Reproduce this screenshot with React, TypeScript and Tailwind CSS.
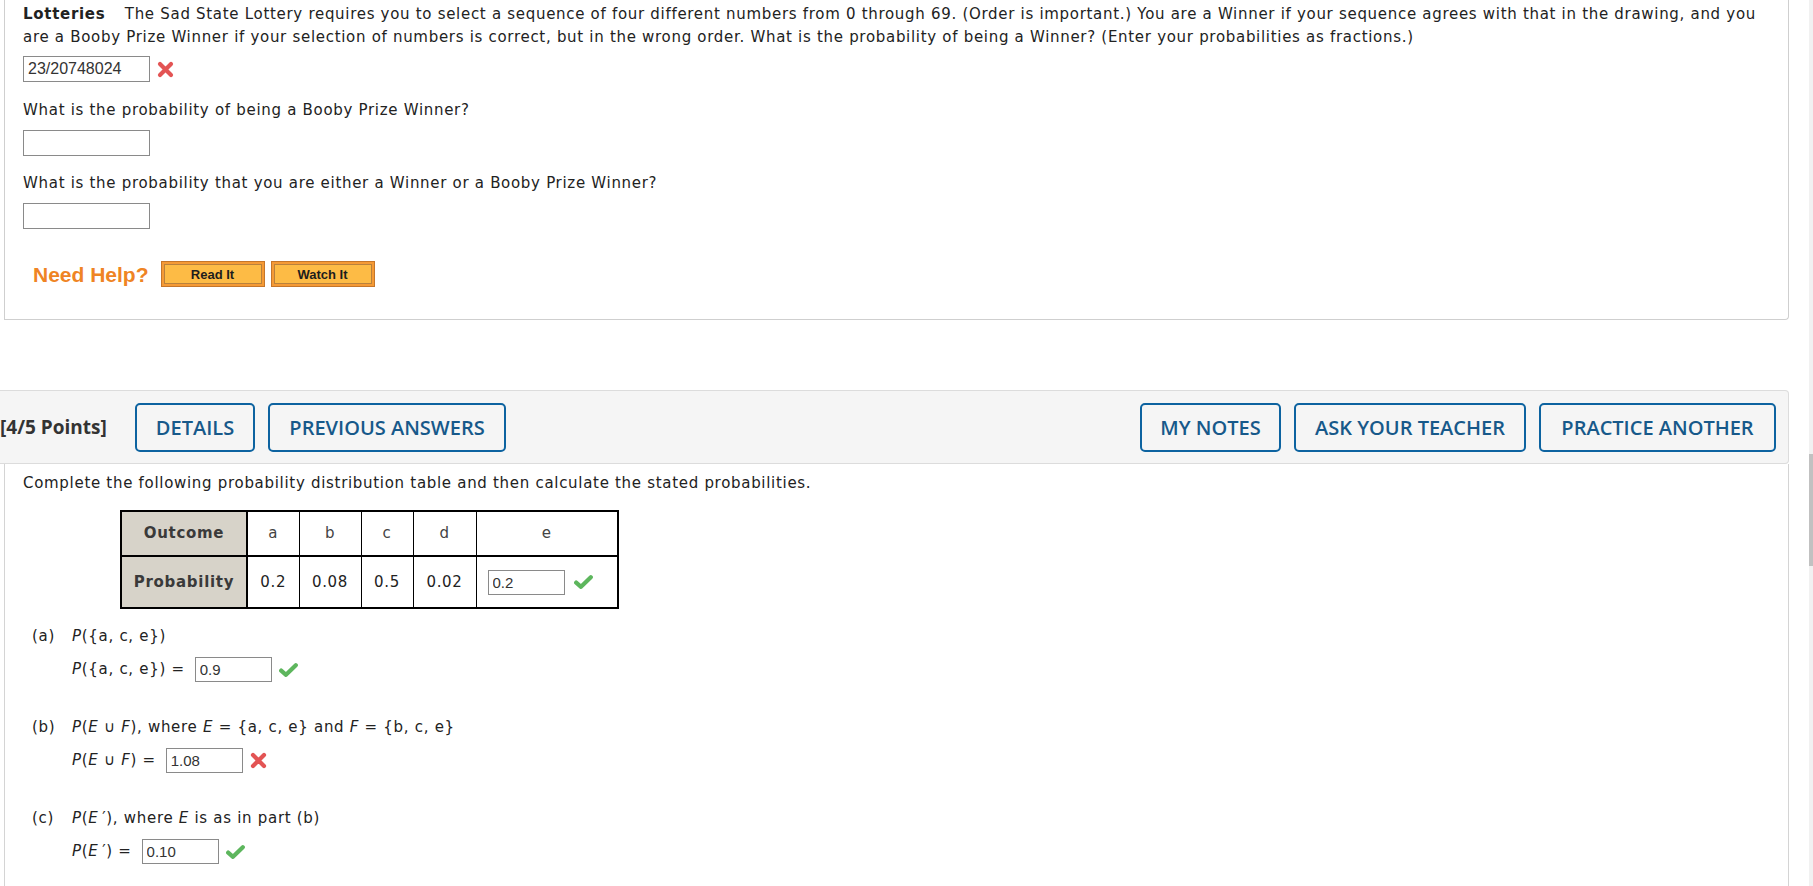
import React from 'react'

const body = "font-['DejaVu_Sans',Verdana,sans-serif] text-[15px] leading-[23px] tracking-[0.7px] text-[#222]"
const field = "border border-[#8a8a8a] bg-white px-[4px] font-['Liberation_Sans',Arial,sans-serif] tracking-normal text-[#333] outline-none"

function XMark() {
  return (
    <svg width="17" height="17" viewBox="0 0 17 17" className="shrink-0">
      <path d="M3 3L14 14M14 3L3 14" stroke="#e35454" strokeWidth="4.2" strokeLinecap="round" />
    </svg>
  )
}

function Check() {
  return (
    <svg width="19" height="16" viewBox="0 0 19 16" className="shrink-0">
      <path d="M2.2 8.6L7 12.8L16.8 3.2" fill="none" stroke="#5db65d" strokeWidth="4.2" strokeLinecap="round" strokeLinejoin="round" />
    </svg>
  )
}

function BigInput({ value = '' }: { value?: string }) {
  return <input readOnly value={value} className={`${field} h-[26px] w-[127px] text-[16px]`} />
}

function SmallInput({ value }: { value: string }) {
  return <input readOnly value={value} className={`${field} h-[25px] w-[77px] text-[15px]`} />
}

function HelpButton({ label }: { label: string }) {
  return (
    <div className="h-[26px] w-[104px] border border-[#c5762a] bg-[#f59a35] p-[2px]">
      <div className="flex h-full items-center justify-center border border-[#b9813c] bg-[#fdbb45] font-['Liberation_Sans',Arial,sans-serif] text-[13px] font-bold tracking-normal text-[#1d1d1d]">
        {label}
      </div>
    </div>
  )
}

function BarButton({ label, width }: { label: string; width: string }) {
  return (
    <button className={`${width} h-[49px] rounded-[5px] border-2 border-[#0d63a0] text-center font-['Open_Sans',sans-serif] text-[20px] font-semibold tracking-normal text-[#17598a]`}>
      {label}
    </button>
  )
}

function Part({ tag, question, answer }: { tag: string; question: React.ReactNode; answer: React.ReactNode }) {
  return (
    <div className="ml-[9px] flex">
      <div className="w-[40px] shrink-0">{tag}</div>
      <div>
        <div>{question}</div>
        <div className="mt-[9px] flex h-[25px] items-center gap-[7px]">{answer}</div>
      </div>
    </div>
  )
}

export default function App() {
  return (
    <div className={`relative h-[886px] w-[1813px] overflow-hidden bg-white ${body}`}>
      {/* Previous question */}
      <div className="ml-[4px] w-[1785px] rounded-br-[4px] border-x border-b border-[#cfcfcf] pb-[32px] pl-[18px] pt-[3px]">
        <p>
          <b className="mr-[14px]">Lotteries</b> The Sad State Lottery requires you to select a sequence of four different numbers from 0 through 69. (Order is important.) You are a Winner if your sequence agrees with that in the drawing, and you
          <br />
          are a Booby Prize Winner if your selection of numbers is correct, but in the wrong order. What is the probability of being a Winner? (Enter your probabilities as fractions.)
        </p>
        <div className="mt-[7px] flex items-center gap-[7px]">
          <BigInput value="23/20748024" />
          <XMark />
        </div>
        <p className="mt-[17px]">What is the probability of being a Booby Prize Winner?</p>
        <div className="mt-[8px]">
          <BigInput />
        </div>
        <p className="mt-[16px]">What is the probability that you are either a Winner or a Booby Prize Winner?</p>
        <div className="mt-[8px]">
          <BigInput />
        </div>
        <div className="ml-[10px] mt-[32px] flex items-center">
          <span className="mr-[12px] font-['Liberation_Sans',Arial,sans-serif] text-[21px] font-bold tracking-normal text-[#ef8424]">Need Help?</span>
          <HelpButton label="Read It" />
          <div className="w-[6px]" />
          <HelpButton label="Watch It" />
        </div>
      </div>

      {/* Question header */}
      <div className="mt-[70px] flex h-[74px] w-[1789px] items-center rounded-r-[4px] border border-l-0 border-[#dcdcdc] bg-[#f5f5f5]">
        <div className="w-[135px] shrink-0 font-['Open_Sans',sans-serif] text-[19px] font-bold tracking-normal text-[#333]">[4/5 Points]</div>
        <div className="flex gap-[13px]">
          <BarButton label="DETAILS" width="w-[120px]" />
          <BarButton label="PREVIOUS ANSWERS" width="w-[238px]" />
        </div>
        <div className="ml-auto mr-[12px] flex gap-[13px]">
          <BarButton label="MY NOTES" width="w-[141px]" />
          <BarButton label="ASK YOUR TEACHER" width="w-[232px]" />
          <BarButton label="PRACTICE ANOTHER" width="w-[237px]" />
        </div>
      </div>

      {/* Question body */}
      <div className="ml-[4px] h-[430px] w-[1785px] border-x border-[#d4d4d4] pl-[18px] pt-[8px]">
        <p>Complete the following probability distribution table and then calculate the stated probabilities.</p>
        <table className="ml-[97px] mt-[15px] border-collapse border-2 border-black text-center">
          <tbody>
            <tr className="h-[45px]">
              <td className="w-[126px] border-2 border-black bg-[#d7d3c9] font-bold text-[#3a3a3a]">Outcome</td>
              <td className="w-[52px] border border-b-2 border-black text-[#444]">a</td>
              <td className="w-[62px] border border-b-2 border-black text-[#444]">b</td>
              <td className="w-[52px] border border-b-2 border-black text-[#444]">c</td>
              <td className="w-[63px] border border-b-2 border-black text-[#444]">d</td>
              <td className="w-[142px] border border-b-2 border-black text-[#444]">e</td>
            </tr>
            <tr className="h-[52px]">
              <td className="border-2 border-black bg-[#d7d3c9] font-bold text-[#3a3a3a]">Probability</td>
              <td className="border border-black">0.2</td>
              <td className="border border-black">0.08</td>
              <td className="border border-black">0.5</td>
              <td className="border border-black">0.02</td>
              <td className="border border-black">
                <div className="flex items-center gap-[9px] pl-[11px]">
                  <SmallInput value="0.2" />
                  <Check />
                </div>
              </td>
            </tr>
          </tbody>
        </table>

        <div className="mt-[16px] flex flex-col gap-[34px]">
          <Part
            tag="(a)"
            question={<><i>P</i>({'{'}a, c, e{'}'})</>}
            answer={<><span className="mr-[3px]"><i>P</i>({'{'}a, c, e{'}'}) =</span><SmallInput value="0.9" /><Check /></>}
          />
          <Part
            tag="(b)"
            question={<><i>P</i>(<i>E</i> ∪ <i>F</i>), where <i>E</i> = {'{'}a, c, e{'}'} and <i>F</i> = {'{'}b, c, e{'}'}</>}
            answer={<><span className="mr-[3px]"><i>P</i>(<i>E</i> ∪ <i>F</i>) =</span><SmallInput value="1.08" /><XMark /></>}
          />
          <Part
            tag="(c)"
            question={<><i>P</i>(<i>E</i>{'\u2009'}′), where <i>E</i> is as in part (b)</>}
            answer={<><span className="mr-[3px]"><i>P</i>(<i>E</i>{'\u2009'}′) =</span><SmallInput value="0.10" /><Check /></>}
          />
        </div>
      </div>

      {/* Scrollbar */}
      <div className="absolute right-0 top-0 h-full w-[4px] bg-[#f1f1f1]">
        <div className="absolute left-0 top-[454px] h-[112px] w-full bg-[#c1c1c1]" />
      </div>
    </div>
  )
}
